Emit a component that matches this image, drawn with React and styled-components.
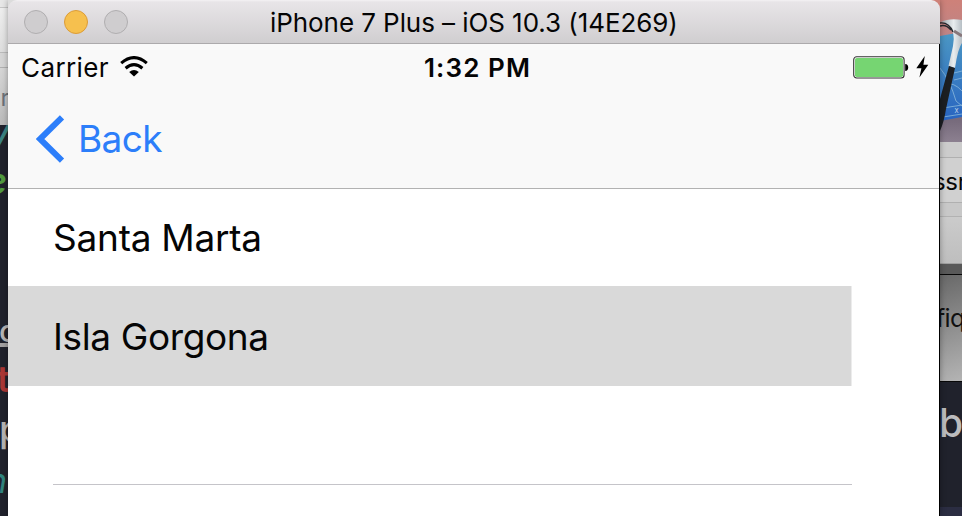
import React from "react";
import styled, { createGlobalStyle } from "styled-components";

const Global = createGlobalStyle`
  * { box-sizing: border-box; }
  html, body { margin: 0; padding: 0; }
  body { overflow: hidden; font-family: Inter, "Liberation Sans", sans-serif; color: #050505; }
`;

const Desktop = styled.main`
  display: grid;
  grid-template-columns: 8px 932px 22px;
  width: 962px;
  height: 516px;
  overflow: hidden;
  background: #20222c;
`;

const Strip = styled.aside`
  display: flex;
  flex-direction: column;
  height: 516px;
  overflow: hidden;
`;

const Band = styled.div`
  flex: none;
  height: ${(p) => p.$h}px;
  background: ${(p) => p.$bg};
  border-bottom: ${(p) => (p.$line ? `1px solid ${p.$line}` : "0")};
  overflow: hidden;
`;

const Clip = styled.span`
  display: block;
  width: max-content;
  margin-top: ${(p) => p.$top}px;
  margin-left: ${(p) => p.$left}px;
  font-size: ${(p) => p.$size}px;
  font-weight: ${(p) => p.$weight || 400};
  font-style: ${(p) => (p.$italic ? "italic" : "normal")};
  line-height: ${(p) => p.$size}px;
  letter-spacing: ${(p) => p.$track || 0}px;
  color: ${(p) => p.$color};
`;

const Underline = styled.div`
  width: 8px;
  height: 4px;
  margin-top: -3px;
  background: #a3a1a2;
`;

const Window = styled.section`
  display: flex;
  flex-direction: column;
  height: 516px;
  background: linear-gradient(90deg, #dcdcdc 50%, #ce8179 50%);
  box-shadow: 0 0 6px rgba(0, 0, 0, 0.35);
  z-index: 1;
`;

const TitleBar = styled.header`
  display: grid;
  grid-template-columns: 262px 408px 1fr;
  align-items: center;
  height: 44px;
  border-radius: 9px 9px 0 0;
  border-bottom: 1px solid #acaaac;
  background: linear-gradient(#f4f2f4 0, #e8e5e8 2px, #d0ced0 43px);
`;

const Lights = styled.div`
  display: flex;
  gap: 16px;
  padding-left: 16px;
`;

const Light = styled.i`
  width: 24px;
  height: 24px;
  border-radius: 50%;
  border: 1px solid ${(p) => (p.$on ? "#dc9c38" : "#b0aeb0")};
  background: ${(p) => (p.$on ? "#f6c04e" : "#cfcdcf")};
`;

const Title = styled.h1`
  margin: 0;
  padding-top: 2px;
  font-size: 26px;
  font-weight: 400;
  line-height: 30px;
  letter-spacing: -0.07px;
  white-space: nowrap;
`;

const Phone = styled.div`
  flex: 1;
  display: flex;
  flex-direction: column;
  border-right: 1px solid #000;
  background: #fff;
`;

const NavArea = styled.div`
  height: 145px;
  border-bottom: 1px solid #b2b2b2;
  background: #f9f9f9;
`;

const StatusBar = styled.div`
  display: grid;
  grid-template-columns: 402px 1fr auto;
  align-items: center;
  height: 48px;
  padding: 0 10px 0 14px;
`;

const Carrier = styled.div`
  display: flex;
  align-items: center;
  gap: 12px;
  font-size: 26px;
  line-height: 32px;
`;

const CarrierName = styled.span`
  width: 86px;
  margin-left: -1px;
  letter-spacing: 0.4px;
  white-space: nowrap;
`;

const Wifi = styled.svg`
  margin: -3px 0 0 1px;
`;

const Clock = styled.time`
  font-size: 26px;
  line-height: 32px;
  font-weight: 560;
  letter-spacing: 1.1px;
  white-space: nowrap;
`;

const Power = styled.div`
  display: flex;
  align-items: center;
  gap: 7px;
  padding-bottom: 2px;
`;

const BackButton = styled.button`
  display: flex;
  align-items: center;
  gap: 13px;
  height: 94px;
  margin: 0;
  padding: 0 0 0 28px;
  border: 0;
  background: none;
  color: #2c7efa;
  font: 400 37px/44px Inter, sans-serif;
  letter-spacing: -0.6px;
`;

const List = styled.ul`
  width: 844px;
  margin: 0;
  padding: 0;
  list-style: none;
`;

const Row = styled.li`
  display: flex;
  align-items: center;
  height: ${(p) => p.$h}px;
  padding-left: 45px;
  background: ${(p) => (p.$selected ? "linear-gradient(90deg, #d9d9d9 843px, #ececec 843px)" : "#fff")};
  padding-top: ${(p) => (p.$selected ? 2 : 0)}px;
  font-size: 37px;
  line-height: 44px;
  letter-spacing: ${(p) => p.$track || 0}px;
  white-space: nowrap;
`;

const EmptyRow = styled(Row)`
  margin-left: 45px;
  border-bottom: 1px solid #c5c4c9;
`;

const WifiIcon = () => (
  <Wifi width="28" height="21" viewBox="0 0 28 21" fill="none" stroke="#000">
    <path d="M1.2 7.1Q14-3.9 26.8 7.1" strokeWidth="3.1" />
    <path d="M5.6 12.2Q14 5.1 22.4 12.2" strokeWidth="3.1" />
    <path d="M9.2 16.1Q14 12.1 18.8 16.1L14 20.6Z" fill="#000" stroke="none" />
  </Wifi>
);

const BatteryIcon = () => (
  <svg width="56" height="23" viewBox="0 0 56 23">
    <rect x="0.7" y="0.8" width="50.4" height="21.2" rx="3" fill="#fff" stroke="#333" strokeWidth="1.1" />
    <rect x="2" y="2" width="48" height="19" rx="1.8" fill="#76d572" />
    <path d="M52.2 8C54.2 8 55.2 9.5 55.2 11.5S54.2 15 52.2 15Z" fill="#000" />
  </svg>
);

const BoltIcon = () => (
  <svg width="13" height="22" viewBox="0 0 13 22">
    <path d="M8.8 0L.3 12.2H5.4L3.4 21.5L12.3 8.7H7.4Z" fill="#000" />
  </svg>
);

const BackIcon = () => (
  <svg width="29" height="48" viewBox="0 0 29 48">
    <path d="M26 2.3L4 24L26 45.7" fill="none" stroke="#2c7efa" strokeWidth="6" />
  </svg>
);

const ToolIcon = () => (
  <svg width="22" height="142" viewBox="0 0 22 142">
    <defs>
      <linearGradient id="sky" x2="0" y2="1">
        <stop stopColor="#ce8179" />
        <stop offset=".3" stopColor="#bb8588" />
        <stop offset=".85" stopColor="#776b7c" />
        <stop offset="1" stopColor="#8c8090" />
      </linearGradient>
      <linearGradient id="paper" x2="0" y2="1">
        <stop stopColor="#4c98c4" />
        <stop offset="1" stopColor="#2864c0" />
      </linearGradient>
      <linearGradient id="metal">
        <stop stopColor="#9da5aa" />
        <stop offset=".6" stopColor="#e8edef" />
        <stop offset="1" stopColor="#b7bfc5" />
      </linearGradient>
    </defs>
    <path d="M0 0H22V142H0Z" fill="url(#sky)" />
    <path d="M0 36L22 32V117L0 121Z" fill="url(#paper)" />
    <path d="M0 68Q10 80 16 101L22 106M5 84Q14 82 22 91M14 73L22 71M14 80L22 78M3 108L22 105M3 117L22 114" fill="none" stroke="#8ab9dc" strokeWidth=".8" />
    <text x="14.5" y="113" fontSize="6" fill="#cbdeea">X</text>
    <path d="M1 22Q9 18 22 20V43Q18 48 15 68L8.5 66L13 46Q16 32 8 25Q5 22 1 22Z" fill="url(#metal)" />
    <path d="M0 23Q9 22 13 32M0 26Q6 24 11 30" fill="none" stroke="#24282d" strokeWidth="1.4" />
    <path d="M14 31L22 36" stroke="#87777b" strokeWidth="3" />
    <path d="M9 66L15 68L6 109Q4 122 0 131V99Z" fill="#1c1f23" />
  </svg>
);

export default function App() {
  return (
    <>
      <Global />
      <Desktop>
        <Strip>
          <Band $h={8} $bg="#e7e7e7" $line="#c6c6c6" />
          <Band $h={45} $bg="linear-gradient(#eeeeee, #dddddd)" $line="#bababa" />
          <Band $h={15} $bg="#d5d5d5" $line="#b0b0b0" />
          <Band $h={57} $bg="linear-gradient(#d6d6d6, #bababa)">
            <Clip $size={24} $top={18} $left={0.5} $color="#6c7178">r</Clip>
          </Band>
          <Band $h={38} $bg="#20222c">
            <Clip $size={36} $top={-12} $left={-10} $italic $weight={500} $color="#3b8382">y</Clip>
          </Band>
          <Band $h={137} $bg="#20222c">
            <Clip $size={36} $top={0} $left={-14} $weight={600} $italic $color="#519a3f">e</Clip>
          </Band>
          <Band $h={62} $bg="#20222c">
            <Clip $size={31} $top={15} $left={-1} $weight={500} $color="#b5b3b4">c</Clip>
            <Underline />
          </Band>
          <Band $h={42} $bg="#20222c">
            <Clip $size={36} $top={-1} $left={-3} $weight={600} $color="#aa3735">t</Clip>
          </Band>
          <Band $h={58} $bg="#20222c">
            <Clip $size={37} $top={6} $left={-1} $weight={500} $color="#b8b5b3">p</Clip>
          </Band>
          <Band $h={54} $bg="#20222c">
            <Clip $size={34} $top={2} $left={-13} $italic $color="#30847d">n</Clip>
          </Band>
        </Strip>

        <Window>
          <TitleBar>
            <Lights>
              <Light />
              <Light $on />
              <Light />
            </Lights>
            <Title>iPhone 7 Plus – iOS 10.3 (14E269)</Title>
          </TitleBar>
          <Phone>
            <NavArea>
              <StatusBar>
                <Carrier>
                  <CarrierName>Carrier</CarrierName>
                  <WifiIcon />
                </Carrier>
                <Clock>1:32 PM</Clock>
                <Power>
                  <BatteryIcon />
                  <BoltIcon />
                </Power>
              </StatusBar>
              <BackButton>
                <BackIcon />
                <span>Back</span>
              </BackButton>
            </NavArea>
            <List>
              <Row $h={97} $track={-0.25}>Santa Marta</Row>
              <Row $h={100} $track={-0.38} $selected>Isla Gorgona</Row>
              <EmptyRow $h={99} />
            </List>
          </Phone>
        </Window>

        <Strip>
          <Band $h={142} $bg="#b28087"><ToolIcon /></Band>
          <Band $h={16} $bg="#cccccc" $line="#b0b0b0" />
          <Band $h={45} $bg="#d0d0d0" $line="#b0b0b0">
            <Clip $size={24} $top={12} $left={-7} $track={-0.3} $color="#080808">ssr</Clip>
          </Band>
          <Band $h={14} $bg="#c8c8c8" $line="#b2b2b2" />
          <Band $h={47} $bg="linear-gradient(#cbcbcb, #bebebe)" $line="#a0a0a0" />
          <Band $h={11} $bg="#595959" $line="#080808" />
          <Band $h={107} $bg="linear-gradient(160deg, #686868, #b4b4b4)" $line="#080808">
            <Clip $size={25} $top={31} $left={-4} $track={-0.7} $color="#101010">fiq</Clip>
          </Band>
          <Band $h={125} $bg="#20222c">
            <Clip $size={39} $top={21} $left={-1} $weight={500} $color="#bcbcbe">b</Clip>
          </Band>
          <Band $h={9} $bg="#2b2d42" />
        </Strip>
      </Desktop>
    </>
  );
}
